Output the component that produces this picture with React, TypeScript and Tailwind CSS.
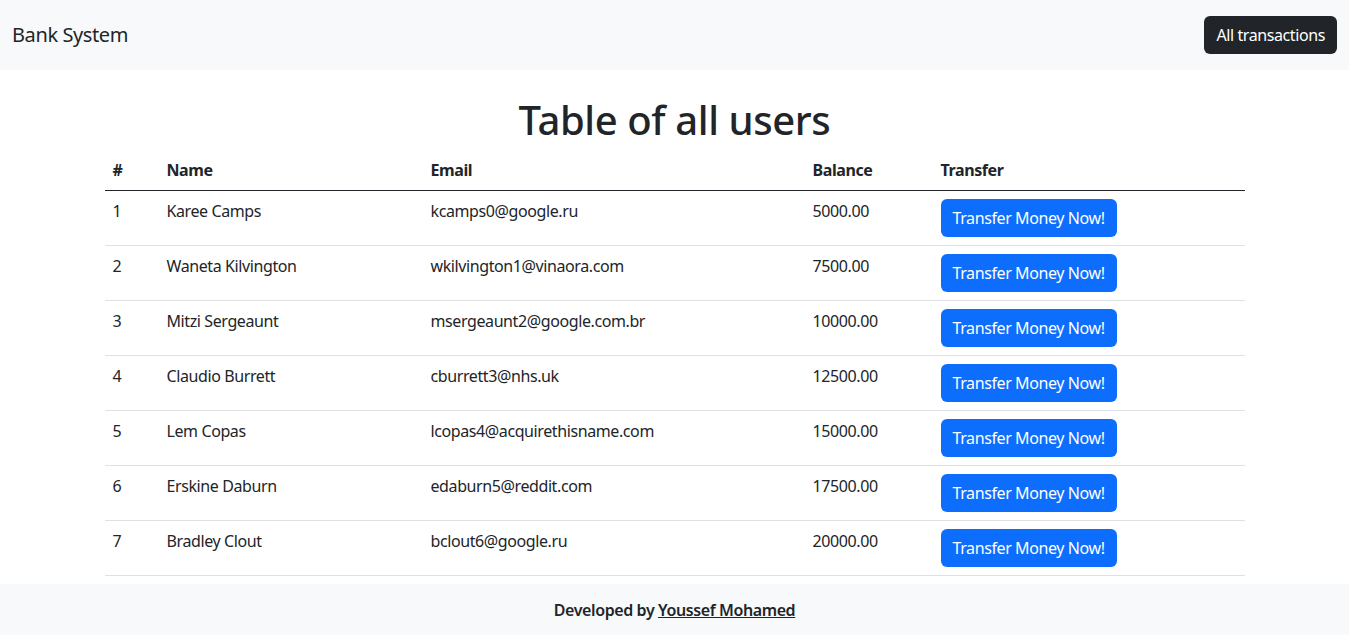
const USERS: Array<[number, string, string, string]> = [
  [1, 'Karee Camps', 'kcamps0@google.ru', '5000.00'],
  [2, 'Waneta Kilvington', 'wkilvington1@vinaora.com', '7500.00'],
  [3, 'Mitzi Sergeaunt', 'msergeaunt2@google.com.br', '10000.00'],
  [4, 'Claudio Burrett', 'cburrett3@nhs.uk', '12500.00'],
  [5, 'Lem Copas', 'lcopas4@acquirethisname.com', '15000.00'],
  [6, 'Erskine Daburn', 'edaburn5@reddit.com', '17500.00'],
  [7, 'Bradley Clout', 'bclout6@google.ru', '20000.00'],
];

export default function App() {
  return (
    <div className="min-h-screen bg-white text-[#212529] text-base leading-6 tracking-[-0.025em] [font-family:'Noto_Sans',sans-serif]">
      <nav className="h-[70px] bg-[#f8f9fa] flex items-center justify-between px-3">
        <a className="text-xl leading-[30px] text-[#212529]">Bank System</a>
        <button className="h-[38px] px-3 rounded-md bg-[#212529] text-white text-base">All transactions</button>
      </nav>

      <main className="w-[1140px] mx-auto">
        <h1 className="mt-[26px] mb-[6px] text-[40px] leading-[48px] font-medium text-center">Table of all users</h1>
        <table className="w-full border-collapse mb-2">
          <thead>
            <tr className="border-b border-[#212529] font-bold text-left">
              <th className="w-[54px] p-2">#</th>
              <th className="w-[264px] p-2">Name</th>
              <th className="w-[382px] p-2">Email</th>
              <th className="w-[128px] p-2">Balance</th>
              <th className="p-2">Transfer</th>
            </tr>
          </thead>
          <tbody>
            {USERS.map(([id, name, email, balance]) => (
              <tr key={id} className="border-b border-[#dee2e6] align-top">
                <td className="p-2">{id}</td>
                <td className="p-2">{name}</td>
                <td className="p-2">{email}</td>
                <td className="p-2">{balance}</td>
                <td className="p-2">
                  <button className="h-[38px] px-3 rounded-md bg-[#0d6efd] text-white">Transfer Money Now!</button>
                </td>
              </tr>
            ))}
          </tbody>
        </table>
      </main>

      <footer className="bg-[#f8f9fa] pt-[14px] pb-4 text-center font-semibold">
        Developed by <a className="underline text-[#212529]">Youssef Mohamed</a>
      </footer>
    </div>
  );
}
